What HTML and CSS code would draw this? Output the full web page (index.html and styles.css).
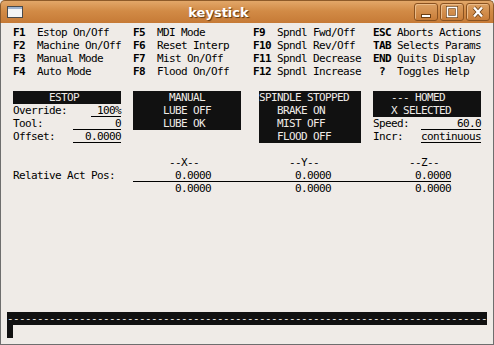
FILE: index.html
```html
<!DOCTYPE html>
<html lang="en">
<head>
    <title>keystick</title>
    <link rel="stylesheet" href="styles.css">
</head>
<body>
<div class="window">
    <div class="titlebar">
        <svg class="app-icon" width="16" height="12" viewBox="0 0 16 12">
            <rect x="0.5" y="0.5" width="15" height="11" fill="#f4f4f4" stroke="#4a4a4a"/>
            <rect x="1" y="1" width="14" height="2" fill="#9fb3cf"/>
        </svg>
        <div class="title">keystick</div>
        <div class="buttons">
            <div class="btn">
                <svg width="14" height="12" viewBox="0 0 14 12">
                    <rect x="2.5" y="8.5" width="9" height="3" fill="#fff" stroke="#6b3f14" stroke-width="1"/>
                </svg>
            </div>
            <div class="btn">
                <svg width="14" height="12" viewBox="0 0 14 12">
                    <rect x="2.5" y="1.5" width="9" height="9" fill="none" stroke="#6b3f14" stroke-width="3"/>
                    <rect x="2.5" y="1.5" width="9" height="9" fill="none" stroke="#fff" stroke-width="1.6"/>
                </svg>
            </div>
            <div class="btn">
                <svg width="14" height="12" viewBox="0 0 14 12">
                    <path d="M3 1.5 L11 10.5 M11 1.5 L3 10.5" stroke="#6b3f14" stroke-width="4"/>
                    <path d="M3 1.5 L11 10.5 M11 1.5 L3 10.5" stroke="#fff" stroke-width="2.4"/>
                </svg>
            </div>
        </div>
    </div>
    <div class="term">
        <div class="row"> <b>F1</b>  Estop On/Off    <b>F5</b>  MDI Mode        <b>F9</b>  Spndl Fwd/Off   <b>ESC</b> Aborts Actions</div>
        <div class="row"> <b>F2</b>  Machine On/Off  <b>F6</b>  Reset Interp    <b>F10</b> Spndl Rev/Off   <b>TAB</b> Selects Params</div>
        <div class="row"> <b>F3</b>  Manual Mode     <b>F7</b>  Mist On/Off     <b>F11</b> Spndl Decrease  <b>END</b> Quits Display</div>
        <div class="row"> <b>F4</b>  Auto Mode       <b>F8</b>  Flood On/Off    <b>F12</b> Spndl Increase   <b>?</b>  Toggles Help</div>
        <div class="row"></div>
        <div class="row"> <span class="inv">      ESTOP       </span>  <span class="inv">      MANUAL      </span>   <span class="inv">SPINDLE STOPPED  </span>  <span class="inv">   --- HOMED      </span></div>
        <div class="row"> Override:    <span class="ul"> 100%</span>  <span class="inv">     LUBE OFF     </span>   <span class="inv">   BRAKE ON      </span>  <span class="inv">   X SELECTED     </span></div>
        <div class="row"> Tool:     <span class="ul">       0</span>  <span class="inv">     LUBE OK      </span>   <span class="inv">   MIST OFF      </span>  Speed:  <span class="ul">      60.0</span></div>
        <div class="row"> Offset:   <span class="ul">  0.0000</span>                       <span class="inv">   FLOOD OFF     </span>  Incr:   <span class="ul">continuous</span></div>
        <div class="row"></div>
        <div class="row">                           --X--               --Y--               --Z--</div>
        <div class="row"> Relative Act Pos:   <span class="ul">       0.0000              0.0000              0.0000</span></div>
        <div class="row">                            0.0000              0.0000              0.0000</div>
        <div class="gap"></div>
        <div class="row"><span class="inv">--------------------------------------------------------------------------------</span></div>
        <div class="row"><span class="cursor"> </span></div>
    </div>
</div>
</body>
</html>
```

FILE: styles.css
```css
body{
    margin: 0;
    background: #efebe7;
    font-family: "DejaVu Sans", sans-serif;
}
.window{
    width: 494px;
    height: 345px;
    display: flex;
    flex-direction: column;
    box-sizing: border-box;
}
.titlebar{
    height: 23px;
    flex: none;
    display: flex;
    align-items: center;
    box-sizing: border-box;
    padding: 0 3px 0 6px;
    background: linear-gradient(#e2a769, #d28b46 45%, #c67a36);
    border: 1px solid #8d5a29;
    border-bottom: none;
    border-radius: 5px 5px 0 0;
}
.app-icon{
    flex: none;
}
.title{
    flex: 1;
    text-align: center;
    color: #fff;
    font-weight: bold;
    font-size: 13px;
    text-shadow: 1px 1px 1px #5a3610;
}
.buttons{
    display: flex;
    gap: 2px;
}
.btn{
    width: 24px;
    height: 18px;
    box-sizing: border-box;
    border: 1px solid #8a5220;
    border-radius: 3px;
    background: linear-gradient(#dca062, #c97d38);
    box-shadow: inset 1px 1px 0 #ebbb88;
    display: flex;
    align-items: center;
    justify-content: center;
}
.term{
    flex: 1;
    border: 1px solid #6e6e6e;
    border-top: none;
    padding: 3px 0 0 6px;
    font-family: "DejaVu Sans Mono", monospace;
    font-size: 11px;
    letter-spacing: -0.623px;
    line-height: 13px;
    color: #000;
}
.row{
    height: 13px;
    white-space: pre;
}
.gap{
    height: 117px;
}
.inv{
    display: inline-block;
    background: #111;
    color: #efebe7;
}
.ul{
    display: inline-block;
    box-shadow: inset 0 -1px 0 #000;
}
.cursor{
    display: inline-block;
    width: 6px;
    background: #111;
}
```
